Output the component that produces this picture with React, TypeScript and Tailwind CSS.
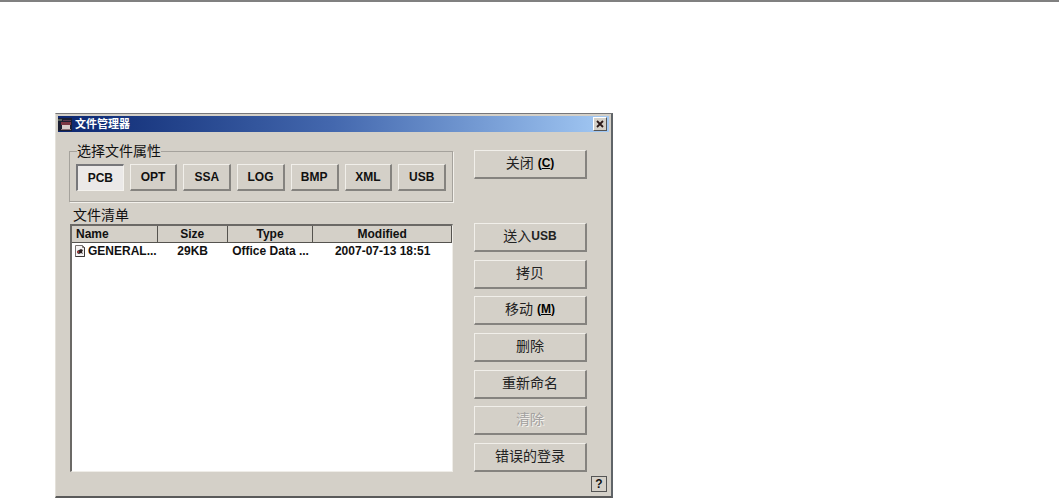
import { useState } from "react";
import clsx from "clsx";

const fileTypes = ["PCB", "OPT", "SSA", "LOG", "BMP", "XML", "USB"];

const files = [
  { name: "GENERAL...", size: "29KB", type: "Office Data ...", modified: "2007-07-13 18:51" },
];

const actions = [
  { label: "送入", suffix: "USB" },
  { label: "拷贝" },
  { label: "移动", shortcut: "M" },
  { label: "删除" },
  { label: "重新命名" },
  { label: "清除", disabled: true },
  { label: "错误的登录" },
];

const raised =
  "border-t border-l border-b-2 border-r-2 border-t-[#f1efea] border-l-[#f1efea] border-b-[#85837f] border-r-[#85837f]";

interface ActionButtonProps {
  label: string;
  suffix?: string;
  shortcut?: string;
  disabled?: boolean;
}

const ActionButton = ({ label, suffix, shortcut, disabled }: ActionButtonProps) => (
  <button
    type="button"
    disabled={disabled}
    className={clsx(
      "flex h-[29px] w-full items-center justify-center bg-[#d4d0c8] pb-0.5 text-sm leading-none",
      raised,
      disabled ? "text-[#a3a1a0] [text-shadow:1px_1px_0_#f4f2ee]" : "text-[#222]"
    )}
  >
    {label}
    {suffix && <span className="text-xs font-bold">{suffix}</span>}
    {shortcut && (
      <span className="ml-1 text-xs font-bold text-black">
        (<u>{shortcut}</u>)
      </span>
    )}
  </button>
);

const AppIcon = () => (
  <svg className="h-3.5 w-3.5" viewBox="0 0 14 14" aria-hidden="true">
    <rect x="0" y="1" width="14" height="13" fill="#1b1f33" />
    <rect x="0" y="2" width="4" height="2" fill="#55605c" />
    <rect x="5" y="3" width="8" height="1" fill="#5a3a50" />
    <rect x="3" y="5" width="10" height="3" fill="#7c3644" />
    <rect x="4" y="8" width="8" height="4" fill="#d9cccb" />
    <rect x="3" y="12" width="10" height="1" fill="#8a7078" />
  </svg>
);

const FileIcon = () => (
  <svg className="h-3 w-3 shrink-0" viewBox="0 0 12 12" aria-hidden="true">
    <path d="M1.5 .5h7l2 2v9h-9z" fill="#f6f4f4" stroke="#77716f" />
    <path d="M10.5 2v9.5h-9" fill="none" stroke="#3a3636" />
    <path d="M8.5 .5v2h2" fill="none" stroke="#77716f" />
    <path d="M3 8V6l2-1 2-1 2 1-1 2 1 2-2-1-2 1z" fill="#2a2020" />
    <rect x="3" y="6" width="2" height="2" fill="#9a3a3a" />
  </svg>
);

const headCell =
  "h-[17px] border-r border-b border-[#55534f] p-0 text-center leading-4 font-bold";

export default function App() {
  const [selected, setSelected] = useState("PCB");

  return (
    <div className="border-t-2 border-[#808080] bg-white font-['Liberation_Sans','Noto_Sans_CJK_SC',sans-serif] text-[#111]">
      <main className="mt-[111px] ml-[55px] max-w-[558px] border-t border-l border-r-2 border-b-2 border-t-[#77777a] border-l-[#e4e1da] border-r-[#5f6468] border-b-[#5a5a5a] bg-[#d4d0c8]">
        {/* Title bar */}
        <header className="mx-0.5 mt-0.5 flex h-4 items-center bg-linear-to-r from-[#0c2670] via-[#4468ae] to-[#a3c9f4] pr-0.5">
          <AppIcon />
          <h1 className="ml-[3px] flex-1 text-[11px] leading-4 font-bold text-white">文件管理器</h1>
          <button
            type="button"
            aria-label="Close"
            className="flex h-3.5 w-3.5 items-center justify-center border border-t-white border-l-white border-r-[#555] border-b-[#555] bg-[#d4d0c8]"
          >
            <svg className="h-2 w-2" viewBox="0 0 8 8" aria-hidden="true">
              <path d="M1 1l6 6M7 1l-6 6" stroke="#2a1818" strokeWidth="1.8" />
            </svg>
          </button>
        </header>

        <div className="flex gap-[21px] pt-2.5 pr-6 pl-[13px]">
          <div className="min-w-0 flex-1">
            {/* File type selection */}
            <fieldset className="min-w-0 border border-[#a5a29c] px-1.5 pb-2.5 shadow-[1px_1px_0_#f3f1ec]">
              <legend className="ml-px text-sm leading-[18px]">选择文件属性</legend>
              <div className="grid grid-cols-7 gap-1.5 pt-1">
                {fileTypes.map((type) => (
                  <button
                    key={type}
                    type="button"
                    aria-pressed={selected === type}
                    onClick={() => setSelected(type)}
                    className={clsx(
                      "h-[27px] text-xs leading-none font-bold",
                      selected === type
                        ? "border-t-2 border-l-2 border-r border-b border-t-[#77777a] border-l-[#77777a] border-r-[#f4f2ee] border-b-[#f4f2ee] bg-[#ebe9e8]"
                        : clsx("bg-[#d4d0c8]", raised)
                    )}
                  >
                    {type}
                  </button>
                ))}
              </div>
            </fieldset>

            {/* File list */}
            <h2 id="file-list" className="mt-1 ml-1 text-sm leading-[18px]">
              文件清单
            </h2>
            <div className="ml-px h-[248px] border-t-2 border-l-2 border-r border-b border-t-[#6b6966] border-l-[#6b6966] border-r-[#efede8] border-b-[#efede8] bg-white">
              <table
                aria-labelledby="file-list"
                className="w-full table-fixed border-separate border-spacing-0 text-xs"
              >
                <thead className="bg-[#d4d0c8]">
                  <tr>
                    <th className={clsx(headCell, "w-[22.5%] pl-1 text-left")}>Name</th>
                    <th className={clsx(headCell, "w-[18.5%]")}>Size</th>
                    <th className={clsx(headCell, "w-[22.5%]")}>Type</th>
                    <th className={headCell}>Modified</th>
                  </tr>
                </thead>
                <tbody>
                  {files.map((file) => (
                    <tr key={file.name} className="text-center leading-4 font-bold whitespace-nowrap">
                      <td className="p-0">
                        <div className="flex items-center gap-0.5 pl-0.5">
                          <FileIcon />
                          {file.name}
                        </div>
                      </td>
                      <td className="p-0">{file.size}</td>
                      <td className="p-0">{file.type}</td>
                      <td className="p-0">{file.modified}</td>
                    </tr>
                  ))}
                </tbody>
              </table>
            </div>
          </div>

          {/* Actions */}
          <div className="flex w-[113px] shrink-0 flex-col pt-2">
            <ActionButton label="关闭" shortcut="C" />
            <div className="mt-11 flex flex-1 flex-col justify-between">
              {actions.map((action) => (
                <ActionButton key={action.label} {...action} />
              ))}
            </div>
          </div>
        </div>

        <footer className="flex justify-end py-1 pr-1">
          <button
            type="button"
            aria-label="Help"
            className="flex h-4 w-4 items-center justify-center border border-[#555] bg-[#d4d0c8] text-xs leading-none font-bold"
          >
            ?
          </button>
        </footer>
      </main>
    </div>
  );
}
